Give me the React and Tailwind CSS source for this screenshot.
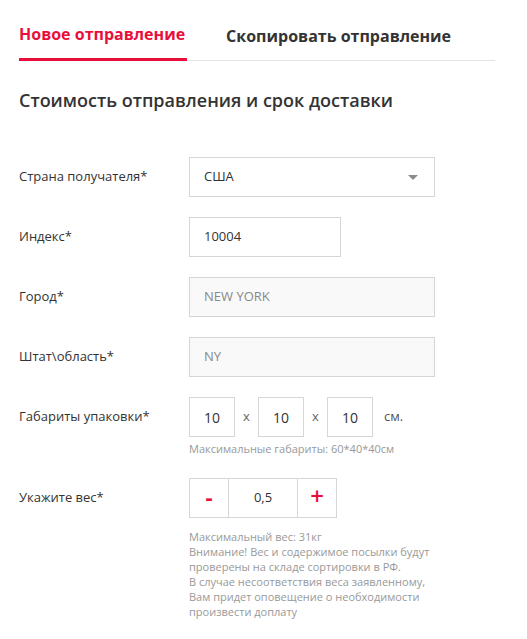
export default function App() {
  const label = 'w-[170px] shrink-0 text-[13px] text-[#333]';
  const box = 'h-[40px] border border-[#d6d6d6] flex items-center px-[14px] text-[13px] text-[#333]';

  return (
    <div className="min-h-screen bg-white font-['Open_Sans',sans-serif] pl-[19px] pr-[32px] pt-[22px]">
      {/* tabs */}
      <div className="flex items-end border-b border-[#e3e3e3]">
        <div className="border-b-[3px] border-[#e8103b] -mb-px pb-[12px] pr-[2px] text-[16px] font-bold text-[#e8103b]">
          Новое отправление
        </div>
        <div className="ml-[39px] pb-[12px] text-[16px] font-bold text-[#333]">
          Скопировать отправление
        </div>
      </div>

      <h2 className="mt-[26px] text-[18px] font-semibold text-[#333]">
        Стоимость отправления и срок доставки
      </h2>

      <div className="mt-[43px] flex flex-col gap-[20px]">
        <div className="flex items-center">
          <div className={label}>Страна получателя*</div>
          <div className={`${box} w-[246px] justify-between`}>
            <span>США</span>
            <span className="mr-[2px] w-0 h-0 border-l-[5px] border-r-[5px] border-t-[5px] border-l-transparent border-r-transparent border-t-[#8a8a8a]" />
          </div>
        </div>

        <div className="flex items-center">
          <div className={label}>Индекс*</div>
          <div className={`${box} w-[152px]`}>10004</div>
        </div>

        <div className="flex items-center">
          <div className={label}>Город*</div>
          <div className={`${box} w-[246px] bg-[#f9f9f9] text-[#888]`}>NEW YORK</div>
        </div>

        <div className="flex items-center">
          <div className={label}>Штат\область*</div>
          <div className={`${box} w-[246px] bg-[#f9f9f9] text-[#888]`}>NY</div>
        </div>

        <div className="flex items-start">
          <div className={`${label} h-[40px] flex items-center`}>Габариты упаковки*</div>
          <div>
            <div className="flex items-center text-[14px] text-[#333]">
              <div className="w-[46px] h-[40px] border border-[#d6d6d6] flex items-center justify-center">10</div>
              <span className="w-[23px] text-center text-[13px] text-[#666]">x</span>
              <div className="w-[46px] h-[40px] border border-[#d6d6d6] flex items-center justify-center">10</div>
              <span className="w-[23px] text-center text-[13px] text-[#666]">x</span>
              <div className="w-[46px] h-[40px] border border-[#d6d6d6] flex items-center justify-center">10</div>
              <span className="ml-[11px] text-[13px] text-[#555]">см.</span>
            </div>
            <div className="mt-[4px] text-[11px] text-[#999]">Максимальные габариты: 60*40*40см</div>
          </div>
        </div>

        <div className="flex items-start">
          <div className={`${label} h-[40px] flex items-center`}>Укажите вес*</div>
          <div>
            <div className="flex h-[40px] w-[148px] border border-[#d6d6d6] text-[13px] text-[#333]">
              <div className="w-[39px] flex items-center justify-center border-r border-[#d6d6d6] text-[22px] font-bold text-[#e8103b] leading-none pb-[3px]">-</div>
              <div className="w-[69px] flex items-center justify-center border-r border-[#d6d6d6]">0,5</div>
              <div className="flex-1 flex items-center justify-center text-[24px] font-semibold text-[#e8103b] leading-none pb-[3px]">+</div>
            </div>
            <div className="mt-[11px] text-[11px] leading-[15px] text-[#999]">
              Максимальный вес: 31кг<br />
              Внимание! Вес и содержимое посылки будут<br />
              проверены на складе сортировки в РФ.<br />
              В случае несоответствия веса заявленному,<br />
              Вам придет оповещение о необходимости<br />
              произвести доплату
            </div>
          </div>
        </div>
      </div>
    </div>
  );
}
